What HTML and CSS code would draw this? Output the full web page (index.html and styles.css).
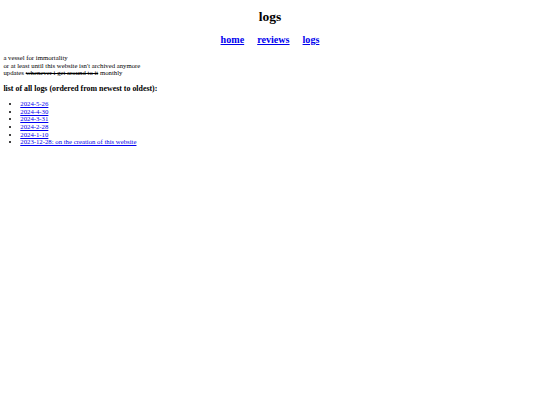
FILE: index.html
```html
<!DOCTYPE html>
<html>
<head>
<meta charset="utf-8">
<title>logs</title>
<link rel="stylesheet" href="styles.css">
</head>
<body class="page">
<h1 class="title">logs</h1>
<h2 class="nav"><a href="#">home</a><a href="#">reviews</a><a href="#">logs</a></h2>
<p class="intro">a vessel for immortality<br>or at least until this website isn't archived anymore<br>updates <s>whenever i get around to it</s> monthly</p>
<h3 class="list-title">list of all logs (ordered from newest to oldest):</h3>
<ul class="log-list">
<li><a href="#">2024-5-26</a></li>
<li><a href="#">2024-4-30</a></li>
<li><a href="#">2024-3-31</a></li>
<li><a href="#">2024-2-28</a></li>
<li><a href="#">2024-1-10</a></li>
<li><a href="#">2023-12-28: on the creation of this website</a></li>
</ul>
</body>
</html>
```
FILE: styles.css
```css
html { background: #fff; }
.page {
  margin: 0 3.375px;
  padding-top: 0.1px;
  font-family: "Liberation Serif", "Times New Roman", serif;
  font-size: 6.75px;
  line-height: 7.55px;
  color: #000;
}
a { color: #0000ee; }
.title {
  font-size: 13.5px;
  line-height: 15.6px;
  margin: 8.5px 0 9.5px;
  text-align: center;
}
.nav {
  font-size: 10.125px;
  line-height: 11.65px;
  margin: 9.5px 0 9px;
  display: flex;
  justify-content: center;
  gap: 13px;
}
.intro { margin: 9px 0 6.9px; }
.list-title {
  font-size: 7.9px;
  line-height: 9.07px;
  margin: 6.9px 0 7.4px;
}
.log-list {
  margin: 7.4px 0;
  padding-left: 16.875px;
}
```
